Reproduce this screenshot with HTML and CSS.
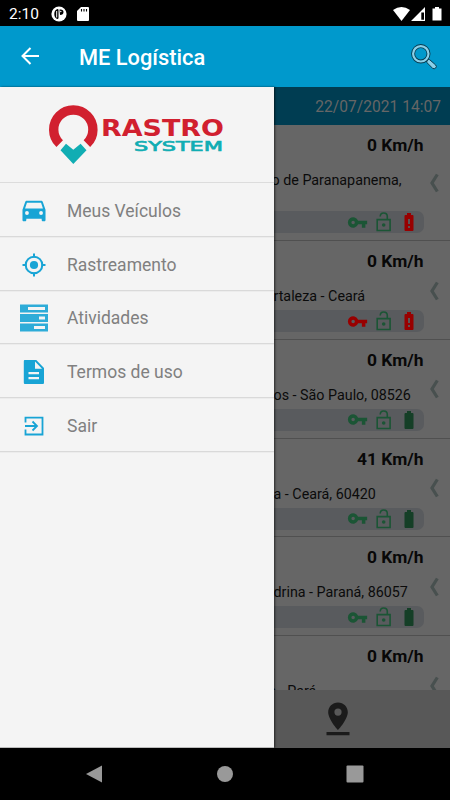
FILE: index.html
```html
<!DOCTYPE html>
<html lang="pt-BR">
<head>
    <title>ME Logística</title>
    <meta charset="UTF-8">
    <meta name="viewport" content="width=device-width, initial-scale=1.0">
    <link rel="stylesheet" href="styles.css">
</head>
<body>
    <svg class="sprite" aria-hidden="true">
        <symbol id="key" viewBox="0 0 24 24"><path d="M12.65 10A6 6 0 1 0 12.65 14H17v4h4v-4h2v-4zM7 14a2 2 0 1 1 0-4 2 2 0 0 1 0 4z"/></symbol>
        <symbol id="lock" viewBox="0 0 16 20"><path d="M1.2 7.6h12.9v10.9H1.2zM4.2 4.5C4.300 2.200 5.700 1 7.600 1c2.100 0 3.700 1.400 3.700 3.500v3" fill="none" stroke="currentColor" stroke-width="1.600"/><circle cx="7.700" cy="13" r="1.800"/></symbol>
        <symbol id="battery" viewBox="0 0 10 18"><path d="M3 0h4v2h1.5q1 0 1 1v14q0 1-1 1h-7q-1 0-1-1V3q0-1 1-1H3z"/></symbol>
        <symbol id="alert" viewBox="0 0 10 18"><path fill-rule="evenodd" d="M3 0h4v2h1.5q1 0 1 1v14q0 1-1 1h-7q-1 0-1-1V3q0-1 1-1H3zM4.1 6v5h1.8V6zM4.1 13v2h1.8v-2z"/></symbol>
        <symbol id="chevron" viewBox="0 0 10 20"><path d="M8.300 1.500L3 10l5.300 8.500" fill="none" stroke="currentColor" stroke-width="3.200"/></symbol>
    </svg>

    <div class="phone">
        <div class="status-bar">
            <span class="clock">2:10</span>
            <svg class="icon-app" viewBox="0 0 16 16"><circle cx="8" cy="8" r="7.600" fill="#fff"/><path d="M6.500 3Q3.300 4 3.300 8t3 5q1.200 0 1.200-1.300V4Q7.500 3 6.500 3zM8.500 3.500q4-.5 4 2.500T9 9z" fill="#000"/><path d="M5.700 5v6.500" stroke="#fff" stroke-width="1"/><circle cx="9.800" cy="5.500" r=".7" fill="#fff"/></svg>
            <svg class="icon-sd" viewBox="0 0 12 14"><path fill="#fff" d="M4 0h7q1 0 1 1v12q0 1-1 1H1q-1 0-1-1V4z"/><path d="M4.500 2v2.500M7 2v2.500M9.500 2v2.500" stroke="#000" stroke-width="1.100"/></svg>
            <div class="signals">
                <svg width="17" height="14" viewBox="0 0 17 14"><path fill="#fff" d="M0 3Q8.500-3 17 3L8.500 14z"/></svg>
                <svg width="14" height="14" viewBox="0 0 14 14"><path fill="#fff" fill-rule="evenodd" d="M14 0v14H0zM10.300 5.500v7.200H13V5.500z"/></svg>
                <svg class="icon-charge" width="10" height="14" viewBox="0 0 10 14"><path fill="#fff" d="M3 0h4v1.500h2.500V13.500H.5V1.500H3z"/></svg>
            </div>
        </div>

        <header class="toolbar">
            <svg class="back" viewBox="0 0 18 18"><path d="M18 9H2M9.500 1L1.500 9l8 8" fill="none" stroke="#fff" stroke-width="2"/></svg>
            <h1>ME Logística</h1>
            <svg class="search" viewBox="0 0 26 26">
                <path d="M14.500 14.500l3 3" stroke="#073d52" stroke-width="3"/>
                <path d="M15.800 18.500l5.700 5.700q1.800 1.300 3.200-.2t0-3l-6-5.300q-1.700-.5-2.400.3t-.5 2.500z" fill="#8bd0e8" stroke="#073d52" stroke-width="1"/>
                <circle cx="9.800" cy="9.800" r="7.700" fill="none" stroke="#073d52" stroke-width="4"/>
                <circle cx="9.800" cy="9.800" r="7.700" fill="none" stroke="#8bd0e8" stroke-width="2.200"/>
            </svg>
        </header>

        <main class="main">
            <nav class="drawer">
                <div class="brand">
                    <svg viewBox="0 0 176 60">
                        <path d="M11.700 38.700A19.600 19.600 0 1 1 38.900 38.700" fill="none" stroke="#d1202f" stroke-width="9.400"/>
                        <path d="M12.500 45.300l5.500-6.500 7.300 6 7.300-6 5.900 6.500L25.300 59z" fill="#10adb3"/>
                        <text class="brand-top" x="53" y="31" textLength="123" lengthAdjust="spacingAndGlyphs">RASTRO</text>
                        <text class="brand-bottom" x="86" y="46" textLength="89" lengthAdjust="spacingAndGlyphs">SYSTEM</text>
                    </svg>
                </div>
                <a class="menu-item">
                    <svg viewBox="0 0 24 24"><path fill-rule="evenodd" d="M18.900 5c-.2-.6-.8-1-1.400-1h-11c-.7 0-1.200.4-1.400 1L3 11v8c0 .6.400 1 1 1h1c.6 0 1-.4 1-1v-1h12v1c0 .6.400 1 1 1h1c.6 0 1-.4 1-1v-8zM6.500 15a1.500 1.500 0 1 1 0-3 1.500 1.500 0 0 1 0 3zm11 0a1.500 1.500 0 1 1 0-3 1.500 1.500 0 0 1 0 3zM5 10l1.500-4.500h11L19 10z" transform="matrix(1.280 0 0 1.280 -3.360 -3.300)"/></svg>
                    <span>Meus Veículos</span>
                </a>
                <a class="menu-item">
                    <svg viewBox="0 0 24 24"><circle cx="12" cy="12" r="4.100"/><path d="M12 .5v4M12 19.500v4M.5 12h4M19.500 12h4" stroke="currentColor" stroke-width="2"/><circle cx="12" cy="12" r="8.300" fill="none" stroke="currentColor" stroke-width="2"/></svg>
                    <span>Rastreamento</span>
                </a>
                <a class="menu-item">
                    <svg class="wide" viewBox="0 0 28 28"><path fill="#2eacd8" fill-rule="evenodd" d="M0 .5h28v8H0zM8 3v3h17V3zM0 10h28v8H0zM19 12.500v3h6v-3zM0 19.500h28v8H0zM14 22v3h11v-3z"/></svg>
                    <span>Atividades</span>
                </a>
                <a class="menu-item">
                    <svg viewBox="0 0 24 24"><path fill-rule="evenodd" d="M3.500-.3H14L22 8v14.500q0 1.700-1.700 1.700H3.500q-1.700 0-1.700-1.700v-21q0-1.800 1.700-1.800zM13 1.500V8.700h7zM6.500 12v2.200h10.500V12zM6.500 17v2.200h10.500V17z"/></svg>
                    <span>Termos de uso</span>
                </a>
                <a class="menu-item">
                    <svg viewBox="0 0 24 24"><path d="M3.500 8.500V3.700h17v16.800h-17v-5M3 12h11.500M10.500 7.500L15 12l-4.500 4.500" fill="none" stroke="currentColor" stroke-width="1.800"/></svg>
                    <span>Sair</span>
                </a>
            </nav>

            <section class="vehicles">
                <div class="date-bar">22/07/2021 14:07</div>
                <div class="list">
                    <article class="card tall">
                        <strong class="speed">0 Km/h</strong>
                        <p class="address first">o de Paranapanema,</p>
                        <div class="state"><svg class="key"><use href="#key"/></svg><svg class="lock"><use href="#lock"/></svg><svg class="battery red"><use href="#alert"/></svg></div>
                        <svg class="chevron"><use href="#chevron"/></svg>
                    </article>
                    <article class="card">
                        <strong class="speed">0 Km/h</strong>
                        <p class="address">rtaleza - Ceará</p>
                        <div class="state"><svg class="key red"><use href="#key"/></svg><svg class="lock"><use href="#lock"/></svg><svg class="battery red"><use href="#alert"/></svg></div>
                        <svg class="chevron"><use href="#chevron"/></svg>
                    </article>
                    <article class="card">
                        <strong class="speed">0 Km/h</strong>
                        <p class="address">os - São Paulo, 08526</p>
                        <div class="state"><svg class="key"><use href="#key"/></svg><svg class="lock"><use href="#lock"/></svg><svg class="battery"><use href="#battery"/></svg></div>
                        <svg class="chevron"><use href="#chevron"/></svg>
                    </article>
                    <article class="card">
                        <strong class="speed">41 Km/h</strong>
                        <p class="address">a - Ceará, 60420</p>
                        <div class="state"><svg class="key"><use href="#key"/></svg><svg class="lock"><use href="#lock"/></svg><svg class="battery"><use href="#battery"/></svg></div>
                        <svg class="chevron"><use href="#chevron"/></svg>
                    </article>
                    <article class="card">
                        <strong class="speed">0 Km/h</strong>
                        <p class="address">drina - Paraná, 86057</p>
                        <div class="state"><svg class="key"><use href="#key"/></svg><svg class="lock"><use href="#lock"/></svg><svg class="battery"><use href="#battery"/></svg></div>
                        <svg class="chevron"><use href="#chevron"/></svg>
                    </article>
                    <article class="card">
                        <strong class="speed">0 Km/h</strong>
                        <p class="address last">a - Pará</p>
                        <svg class="chevron"><use href="#chevron"/></svg>
                    </article>
                </div>
                <footer class="tabs">
                    <svg viewBox="0 0 24 34"><path fill-rule="evenodd" d="M12 .5C6.400.5 2.200 4.800 2.200 10.200 2.200 17.500 12 28 12 28s9.800-10.500 9.800-17.800C21.800 4.800 17.600.5 12 .5zM12 6.500a3.600 3.600 0 1 1 0 7.200 3.600 3.600 0 0 1 0-7.200zM.5 30h23v3.200H.5z"/></svg>
                </footer>
            </section>
        </main>

        <div class="nav-bar">
            <svg viewBox="0 0 18 18"><path d="M16 .500v17L0 9z"/></svg>
            <svg viewBox="0 0 18 18"><circle cx="9" cy="9" r="8"/></svg>
            <svg viewBox="0 0 18 18"><rect x=".5" y=".5" width="17" height="17" rx="1"/></svg>
        </div>
    </div>
</body>
</html>
```

FILE: styles.css
```css
* {
    box-sizing: border-box;
    margin: 0;
    padding: 0;
}

body {
    font-family: Roboto, "Liberation Sans", sans-serif;
    background: #000;
}

svg {
    display: block;
    flex: none;
    fill: currentColor;
}

.sprite {
    display: none;
}

.phone {
    width: 450px;
    height: 800px;
    display: flex;
    flex-direction: column;
    overflow: hidden;
}

/* top bars */
.status-bar {
    height: 26px;
    display: flex;
    align-items: center;
    padding: 1px 8px 0 9px;
    color: #fff;
}

.clock {
    width: 42px;
    font-size: 15.5px;
}

.icon-app {
    width: 16px;
    height: 16px;
}

.icon-sd {
    width: 12px;
    height: 14px;
    margin-left: 10px;
}

.signals {
    display: flex;
    gap: 1px;
    margin-left: auto;
}

.icon-charge {
    margin-left: 6px;
}

.toolbar {
    height: 61px;
    display: flex;
    align-items: center;
    padding: 0 13px 0 21px;
    background: #0099cc;
    color: #fff;
}

.back {
    width: 18px;
    height: 18px;
    margin-top: -1px;
}

h1 {
    margin: 2px 0 0 40px;
    font-size: 21.8px;
    font-weight: 500;
}

.search {
    width: 26px;
    height: 26px;
    margin-left: auto;
}

.main {
    height: 661px;
    display: flex;
}

/* drawer */
.drawer {
    width: 273.5px;
    flex: none;
    background: #f4f4f4;
    border-bottom: 1px solid #bbb;
    box-shadow: 1px 0 2px rgba(0, 0, 0, 0.6);
    z-index: 1;
}

.brand {
    height: 96px;
    padding: 18px 0 0 48px;
    border-bottom: 1px solid #dcdcdc;
}

.brand svg {
    width: 176px;
    height: 60px;
}

.brand text {
    font-family: "DejaVu Sans", sans-serif;
}

.brand-top {
    font-size: 23px;
    font-weight: bold;
    fill: #d1202f;
}

.brand-bottom {
    font-size: 14.5px;
    fill: #10adb3;
    stroke: #10adb3;
    stroke-width: 0.7px;
}

.menu-item {
    height: 53.8px;
    display: flex;
    align-items: center;
    padding: 3px 0 0 20px;
    border-bottom: 1px solid #d9d9d9;
    box-shadow: 0 1px #ececec;
    color: #18a4d5;
}

.menu-item svg {
    width: 24px;
    height: 24px;
    margin: 0 2px;
}

.menu-item .wide {
    width: 28px;
    height: 28px;
    margin: 0;
}

.menu-item span {
    margin-left: 19px;
    color: #808080;
    font-size: 17.5px;
}

/* vehicle list behind the drawer */
.vehicles {
    flex: 1;
    min-width: 0;
    display: flex;
    flex-direction: column;
    background: #666;
}

.date-bar {
    height: 38px;
    flex: none;
    padding-right: 9px;
    background: #003d52;
    color: #666;
    font-size: 15.6px;
    line-height: 40px;
    text-align: right;
}

.list {
    flex: 1;
    min-height: 0;
    overflow: hidden;
}

.card {
    height: 98.8px;
    display: grid;
    grid-template-columns: 150px 1fr;
    grid-template-rows: 47px 22px 22px;
    border-bottom: 1px solid #505050;
}

.card.tall {
    height: 116px;
    grid-template-rows: 47px 39px 22px;
}

.speed {
    justify-self: end;
    padding-top: 9px;
    font-size: 17.4px;
    font-weight: 700;
    line-height: 22px;
    color: #080808;
}

.address {
    grid-row: 2;
    font-size: 14.3px;
    line-height: 17px;
    white-space: nowrap;
    color: #0b0b0b;
}

.address.first {
    margin-left: -2px;
}

.address.last {
    margin-left: -5px;
}

.state {
    grid-row: 3;
    height: 22px;
    display: flex;
    align-items: center;
    justify-content: flex-end;
    padding-right: 10px;
    border-radius: 0 7px 7px 0;
    background: #595b5e;
    color: #1b5535;
}

.key {
    width: 21px;
    height: 21px;
}

.lock {
    width: 16px;
    height: 20px;
    margin-left: 8px;
}

.battery {
    width: 10px;
    height: 18px;
    margin-left: 12px;
    color: #153f27;
}

.red {
    color: #980000;
}

.chevron {
    grid-column: 2;
    grid-row: 1 / 4;
    align-self: center;
    width: 10px;
    height: 20px;
    margin: 8px 0 0 5px;
    color: #48504f;
}

.tabs {
    height: 58px;
    flex: none;
    display: flex;
    padding: 12px 0 0 52px;
    background: #585858;
    color: #1b1b1b;
}

.tabs svg {
    width: 24px;
    height: 34px;
}

/* system buttons */
.nav-bar {
    height: 52px;
    display: flex;
    align-items: center;
    justify-content: center;
    gap: 112px;
    color: #999;
}

.nav-bar svg {
    width: 18px;
    height: 18px;
}
```
